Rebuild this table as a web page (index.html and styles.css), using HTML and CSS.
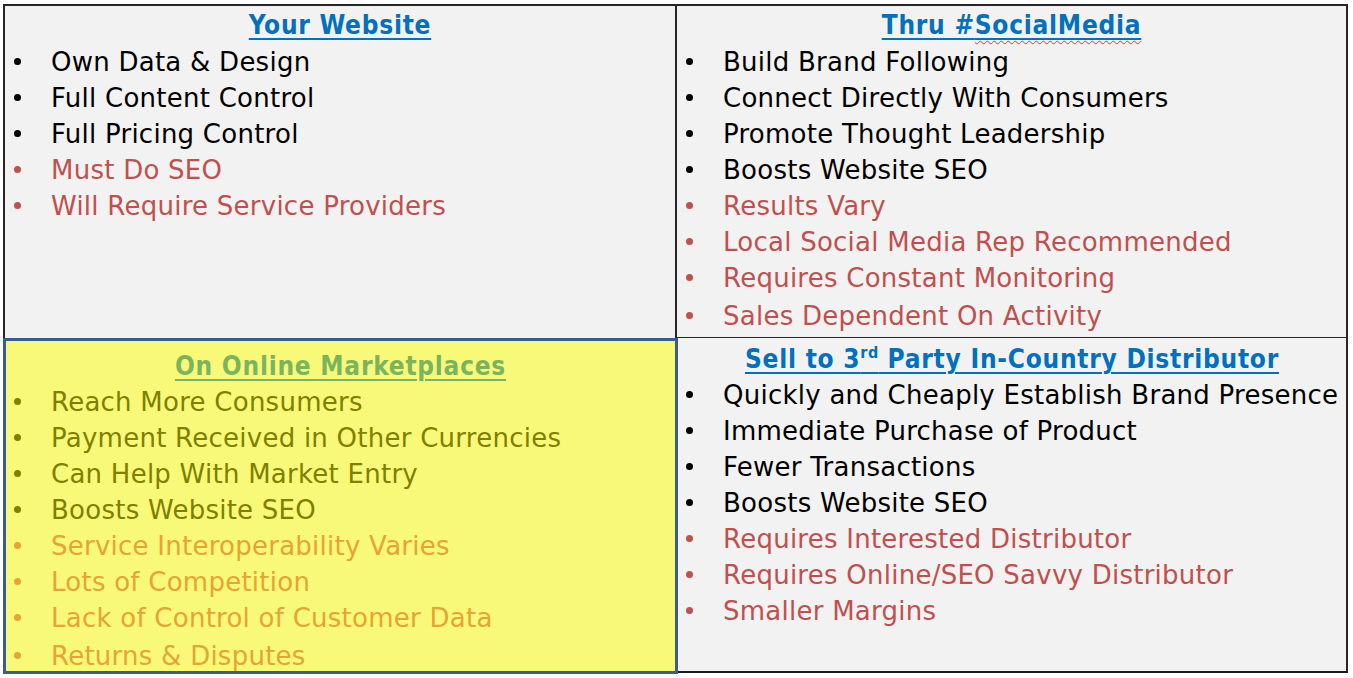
FILE: index.html
```html
<!DOCTYPE html>
<html>
<head>
<meta charset="utf-8">
<link rel="stylesheet" href="styles.css">
</head>
<body>
<div class="grid">
  <div class="cell tl">
    <div class="head blue"><span class="u">Your Website</span></div>
    <ul class="list">
      <li class="pro"><span class="dot"></span>Own Data &amp; Design</li>
      <li class="pro"><span class="dot"></span>Full Content Control</li>
      <li class="pro"><span class="dot"></span>Full Pricing Control</li>
      <li class="con"><span class="dot"></span>Must Do SEO</li>
      <li class="con"><span class="dot"></span>Will Require Service Providers</li>
    </ul>
  </div>
  <div class="cell tr">
    <div class="head blue"><span class="u">Thru #<span class="spell">SocialMedia</span></span></div>
    <ul class="list">
      <li class="pro"><span class="dot"></span>Build Brand Following</li>
      <li class="pro"><span class="dot"></span>Connect Directly With Consumers</li>
      <li class="pro"><span class="dot"></span>Promote Thought Leadership</li>
      <li class="pro"><span class="dot"></span>Boosts Website SEO</li>
      <li class="con"><span class="dot"></span>Results Vary</li>
      <li class="con"><span class="dot"></span>Local Social Media Rep Recommended</li>
      <li class="con"><span class="dot"></span>Requires Constant Monitoring</li>
      <li class="con"><span class="dot"></span>Sales Dependent On Activity</li>
    </ul>
  </div>
  <div class="cell bl">
    <div class="head green"><span class="u">On Online Marketplaces</span></div>
    <ul class="list">
      <li class="opro"><span class="dot"></span>Reach More Consumers</li>
      <li class="opro"><span class="dot"></span>Payment Received in Other Currencies</li>
      <li class="opro"><span class="dot"></span>Can Help With Market Entry</li>
      <li class="opro"><span class="dot"></span>Boosts Website SEO</li>
      <li class="ocon"><span class="dot"></span>Service Interoperability Varies</li>
      <li class="ocon"><span class="dot"></span>Lots of Competition</li>
      <li class="ocon"><span class="dot"></span>Lack of Control of Customer Data</li>
      <li class="ocon"><span class="dot"></span>Returns &amp; Disputes</li>
    </ul>
  </div>
  <div class="cell br">
    <div class="head blue"><span class="u">Sell to 3<sup class="sup">rd</sup> Party In-Country Distributor</span></div>
    <ul class="list">
      <li class="pro"><span class="dot"></span>Quickly and Cheaply Establish Brand Presence</li>
      <li class="pro"><span class="dot"></span>Immediate Purchase of Product</li>
      <li class="pro"><span class="dot"></span>Fewer Transactions</li>
      <li class="pro"><span class="dot"></span>Boosts Website SEO</li>
      <li class="con"><span class="dot"></span>Requires Interested Distributor</li>
      <li class="con"><span class="dot"></span>Requires Online/SEO Savvy Distributor</li>
      <li class="con"><span class="dot"></span>Smaller Margins</li>
    </ul>
  </div>
</div>
</body>
</html>
```

FILE: styles.css
```css
html, body {
  margin: 0;
  padding: 0;
  background: #ffffff;
}

body {
  font-family: "DejaVu Sans", sans-serif;
  font-size: 26px;
  width: 1353px;
  height: 678px;
  overflow: hidden;
}

.grid {
  display: grid;
  grid-template-columns: 674px 671px;
  grid-template-rows: 335px 335px;
  margin: 4px 0 0 3px;
  width: 1345px;
}

.cell {
  box-sizing: border-box;
  background: #f2f2f2;
  overflow: hidden;
}

.tl {
  border-top: 2px solid #262626;
  border-left: 2px solid #262626;
  border-right: 2px solid #262626;
}

.tr {
  border-top: 2px solid #262626;
  border-right: 2px solid #262626;
  border-bottom: 2px solid #262626;
}

.bl {
  background: #f9f979;
  border: 3px solid #3a5c91;
  margin-top: -1px;
  margin-right: -1px;
  height: 336px;
}

.br {
  border-right: 2px solid #262626;
  border-bottom: 2px solid #1a1a1a;
  margin-left: 1px;
  margin-top: -1px;
  height: 335px;
}

.head {
  font-family: "DejaVu Sans Condensed", "DejaVu Sans", sans-serif;
  letter-spacing: 0.75px;
  text-align: center;
  font-weight: bold;
  white-space: nowrap;
  line-height: 38px;
}

.bl .head {
  padding-top: 7px;
  line-height: 36px;
}

.br .head {
  padding-top: 4px;
  line-height: 35px;
}

.u {
  text-decoration: underline;
  text-decoration-thickness: 2px;
  text-underline-offset: 4px;
}

.blue { color: #0070c0; }
.green { color: #7ab55e; }

.spell {
  text-decoration: underline wavy #ff2a2a;
  text-decoration-thickness: 1px;
  text-underline-offset: 6px;
}

.sup {
  font-size: 16px;
  line-height: 0;
  vertical-align: 10px;
  letter-spacing: 0.5px;
}

.list {
  list-style: none;
  margin: 0;
  padding: 0;
}

.list li {
  line-height: 36px;
  white-space: nowrap;
  letter-spacing: 0.25px;
}

.list li:nth-child(8) {
  margin-top: 2px;
}

.dot {
  display: inline-block;
  width: 7px;
  height: 7px;
  border-radius: 50%;
  background: currentColor;
  margin-left: 9px;
  margin-right: 30px;
  vertical-align: 6px;
}

.bl .dot {
  margin-left: 8px;
}

.br .dot {
  margin-left: 8px;
}

.pro { color: #000000; }
.con { color: #c0504d; }
.opro { color: #7f7f00; }
.ocon { color: #e6a434; }
```
